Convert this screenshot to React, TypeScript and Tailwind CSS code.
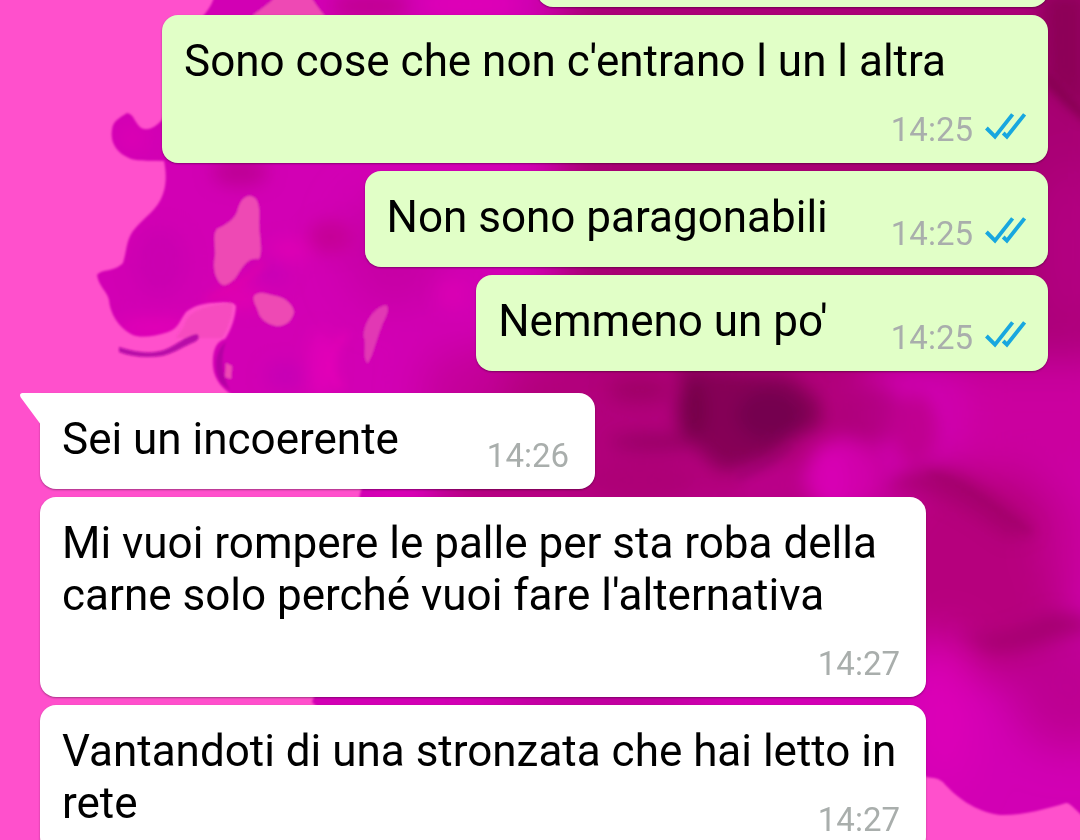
import React from 'react';

type Message = {
  id: number;
  text: string;
  time: string;
  outgoing?: boolean;
  first?: boolean;
};

const messages: Message[] = [
  { id: 1, text: "Sono cose che non c'entrano l un l altra", time: '14:25', outgoing: true },
  { id: 2, text: 'Non sono paragonabili', time: '14:25', outgoing: true },
  { id: 3, text: "Nemmeno un po'", time: '14:25', outgoing: true },
  { id: 4, text: 'Sei un incoerente', time: '14:26', first: true },
  { id: 5, text: "Mi vuoi rompere le palle per sta roba della carne solo perché vuoi fare l'alternativa", time: '14:27' },
  { id: 6, text: 'Vantandoti di una stronzata che hai letto in rete', time: '14:27' },
];

const ReadTicks: React.FC = () => (
  <svg
    className="h-10 w-[42px]"
    viewBox="0 0 42 40"
    fill="none"
    stroke="#18a7df"
    strokeWidth="3.9"
    role="img"
    aria-label="Letto"
  >
    <path d="M1.4 18 L10 26.6 L27.6 4.4" />
    <path d="M18.2 23 L21.9 26.6 L39.6 4.4" />
  </svg>
);

const Tail: React.FC = () => (
  <svg className="absolute top-0 -left-5 h-8 w-[21px]" viewBox="0 0 21 32" aria-hidden="true">
    <path d="M21 0 H2.5 C0 0 -0.6 2.4 0.8 4.4 L20 30.5 L21 32 Z" fill="#fff" />
  </svg>
);

// Ink cloud wallpaper behind the conversation
const Wallpaper: React.FC = () => (
  <svg
    className="absolute inset-0 h-full w-full"
    viewBox="0 0 1080 840"
    preserveAspectRatio="xMidYMid slice"
    aria-hidden="true"
  >
    <defs>
      <filter id="soft" x="-50%" y="-50%" width="200%" height="200%">
        <feGaussianBlur stdDeviation="9" />
      </filter>
      <filter id="wide" x="-50%" y="-50%" width="200%" height="200%">
        <feGaussianBlur stdDeviation="22" />
      </filter>
      <filter id="fine" x="-50%" y="-50%" width="200%" height="200%">
        <feGaussianBlur stdDeviation="4" />
      </filter>
      <filter id="edge">
        <feGaussianBlur stdDeviation="1" />
      </filter>
      <clipPath id="cloud">
        <path d="M200 20 C206 12 213 6 216 -10 H1100 V830 C1075 812 1072 803 1066 803 C1046 809 1020 816 1000 815 C975 812 955 796 943 782 C937 777 931 778 926 777 L900 720 H330 L312 702 C340 640 350 560 360 494 L390 398 H238 C224 391 214 381 213 366 C212 352 216 341 225 339 C231 331 236 315 236 306 C234 301 222 302 210 303 C200 304 192 307 186 312 C180 320 178 329 168 332 C156 336 140 339 131 334 C118 327 110 313 109 300 C107 291 99 287 97 275 C103 268 113 273 123 263 C127 250 126 241 133 231 C144 217 158 210 163 194 C167 183 166 170 164 161 C150 160 138 162 129 158 C117 153 110 143 112 130 C113 120 120 118 127 113 C134 114 134 122 141 128 C149 132 156 126 162 120 Z" />
      </clipPath>
    </defs>

    <rect width="1080" height="840" fill="#ff50cc" />
    <g filter="url(#edge)">
      <g clipPath="url(#cloud)">
        <rect y="-10" width="1100" height="860" fill="#d200b4" />

        <g filter="url(#wide)">
          <rect x="440" y="350" width="430" height="170" fill="#b2007c" />
          <rect x="560" y="-20" width="560" height="380" fill="#a80073" />
          <ellipse cx="975" cy="570" rx="100" ry="110" fill="#b6007d" />
          <rect x="960" y="365" width="160" height="110" fill="#cb009f" />
          <ellipse cx="1070" cy="250" rx="30" ry="90" fill="#b40082" />
          <ellipse cx="1075" cy="540" rx="28" ry="60" fill="#c7009a" />
          <ellipse cx="1070" cy="690" rx="60" ry="60" fill="#bd0092" />
          <ellipse cx="945" cy="710" rx="26" ry="80" fill="#de00b8" />
          <ellipse cx="600" cy="700" rx="110" ry="20" fill="#b80094" />
          <ellipse cx="395" cy="250" rx="50" ry="60" fill="#c600a4" />
          <ellipse cx="465" cy="390" rx="45" ry="40" fill="#c4009a" />
        </g>

        <g filter="url(#soft)">
          <path d="M675 365 L690 400 L688 440 L720 470 L765 466 L788 440 L822 425 L820 400 L790 375 Z" fill="#850057" />
          <ellipse cx="770" cy="415" rx="34" ry="26" fill="#750050" />
          <ellipse cx="692" cy="410" rx="14" ry="32" fill="#74004a" />
          <ellipse cx="640" cy="390" rx="32" ry="14" fill="#a00069" />
          <ellipse cx="655" cy="442" rx="46" ry="7" fill="#920060" />
          <ellipse cx="640" cy="480" rx="55" ry="22" fill="#ad0077" />
          <ellipse cx="775" cy="485" rx="38" ry="24" fill="#b90088" />
          <ellipse cx="842" cy="476" rx="38" ry="38" fill="#d000aa" />
          <ellipse cx="832" cy="480" rx="16" ry="30" fill="#d800b4" />
          <ellipse cx="870" cy="415" rx="36" ry="28" fill="#ac0079" opacity="0.7" />
          <ellipse cx="915" cy="430" rx="23" ry="37" fill="#bf0090" />
          <path d="M885 486 C920 462 950 462 985 490 L1035 530 L1010 540 C970 510 940 490 885 490 Z" fill="#a3006c" opacity="0.8" />
          <path d="M950 628 C990 644 1020 630 1050 612 L1090 618 V632 C1060 632 1030 652 990 650 Z" fill="#a3006e" opacity="0.9" />
          <path d="M1040 -10 H1090 V115 L1044 80 Z" fill="#8d0058" />
          <ellipse cx="240" cy="172" rx="28" ry="14" fill="#bd0094" />
          <ellipse cx="330" cy="237" rx="22" ry="16" fill="#c50096" />
          <ellipse cx="160" cy="262" rx="28" ry="36" fill="#cb00b0" />
          <ellipse cx="272" cy="273" rx="16" ry="12" fill="#c800b6" />
          <ellipse cx="290" cy="250" rx="20" ry="10" fill="#e000b5" />
          <ellipse cx="132" cy="138" rx="14" ry="14" fill="#dc00b4" />
          <ellipse cx="155" cy="328" rx="38" ry="8" fill="#e600b7" />
          <ellipse cx="240" cy="298" rx="24" ry="10" fill="#e200b0" />
          <ellipse cx="322" cy="365" rx="12" ry="36" fill="#e200b8" />
          <ellipse cx="285" cy="376" rx="20" ry="14" fill="#c600b6" />
          <ellipse cx="452" cy="294" rx="14" ry="14" fill="#dc00b4" />
          <ellipse cx="400" cy="494" rx="26" ry="8" fill="#dc00b6" />
          <ellipse cx="470" cy="4" rx="50" ry="12" fill="#e000b8" />
          <ellipse cx="370" cy="6" rx="40" ry="12" fill="#c00090" />
        </g>

        <g filter="url(#fine)" fill="none" strokeLinecap="round">
          <path d="M930 474 C960 480 990 505 1030 532" stroke="#98005f" strokeWidth="5" opacity="0.5" />
          <path d="M1046 78 C1058 90 1070 106 1090 120" stroke="#7b0047" strokeWidth="8" opacity="0.7" />
          <path d="M738 478 C755 470 775 462 790 446" stroke="#8c0060" strokeWidth="4" opacity="0.6" />
          <path d="M340 386 C322 370 330 350 345 335" stroke="#e800b8" strokeWidth="8" opacity="0.6" />
          <path d="M208 300 C225 290 240 288 262 264" stroke="#e600a8" strokeWidth="6" opacity="0.7" />
        </g>
      </g>

      <g fill="#ee48b4">
        <path d="M252 16 C262 8 272 2 280 -8 H308 C315 4 320 10 325 16 Z" />
        <path d="M249 196 C259 196 260 208 259 222 C259 236 263 250 259 259 C248 257 243 266 238 274 C233 282 226 287 221 284 C214 277 213 266 215 256 C216 246 212 236 217 229 C228 224 236 218 238 209 C240 202 243 197 249 196 Z" />
        <path d="M254 296 C260 290 268 295 276 296 C286 298 293 305 294 312 C292 321 285 327 276 326 C267 324 260 319 258 311 C256 305 253 302 254 296 Z" />
        <path d="M386 305 C391 309 385 318 381 328 C376 340 374 353 368 363 C362 359 367 346 364 337 C363 326 372 308 386 305 Z" fill="#e238b4" />
        <path d="M226 363 L232 366 L231 379 L225 377 Z" />
        <path d="M184 326 C188 310 205 306 232 303 C233 312 230 325 222 338 H176 Z" opacity="0.55" />
      </g>
      <path d="M119 347 C137 353 152 354 164 350 C177 345 185 336 197 334 C201 337 198 341 192 343 C181 348 172 354 162 356 C147 358 131 357 119 352 Z" fill="#b80aa8" />
      <path d="M226 342 C213 352 214 374 222 384 L230 390 C222 376 220 358 226 342 Z" fill="#b500a4" />
    </g>
  </svg>
);

const Bubble: React.FC<{ message: Message }> = ({ message }) => {
  const { text, time, outgoing, first } = message;

  return (
    <li
      className={
        'relative max-w-[886px] rounded-2xl pt-5 pb-[13px] pl-[22px] shadow-[0_1px_2px_rgba(0,0,0,0.35)] ' +
        (outgoing ? 'self-end bg-[#e1ffc7] pr-[21px] ' : 'self-start bg-white pr-[26px] ') +
        (first ? 'mt-[14px] rounded-tl-none' : '')
      }
    >
      {first && <Tail />}
      <p className="flow-root text-[44px] leading-[52px] text-black">
        {text}
        <span
          className={
            'float-right mt-[23px] flex items-start gap-3 text-[33px] leading-10 text-[#a9aeac] ' +
            (outgoing ? 'ml-[63px]' : 'ml-[88px]')
          }
        >
          <time>{time}</time>
          {outgoing && <ReadTicks />}
        </span>
      </p>
    </li>
  );
};

const App: React.FC = () => {
  return (
    <main className="relative flex h-screen flex-col overflow-hidden bg-[#ff50cc] font-['Roboto',sans-serif]">
      <Wallpaper />
      <ul className="relative -mt-[89px] flex flex-col gap-2 pr-8 pl-10">
        {/* previous message, scrolled almost out of view */}
        <li className="h-24 w-[511px] self-end rounded-2xl bg-[#e1ffc7] shadow-[0_1px_2px_rgba(0,0,0,0.35)]" />
        {messages.map((message) => (
          <Bubble key={message.id} message={message} />
        ))}
      </ul>
    </main>
  );
};

export default App;
